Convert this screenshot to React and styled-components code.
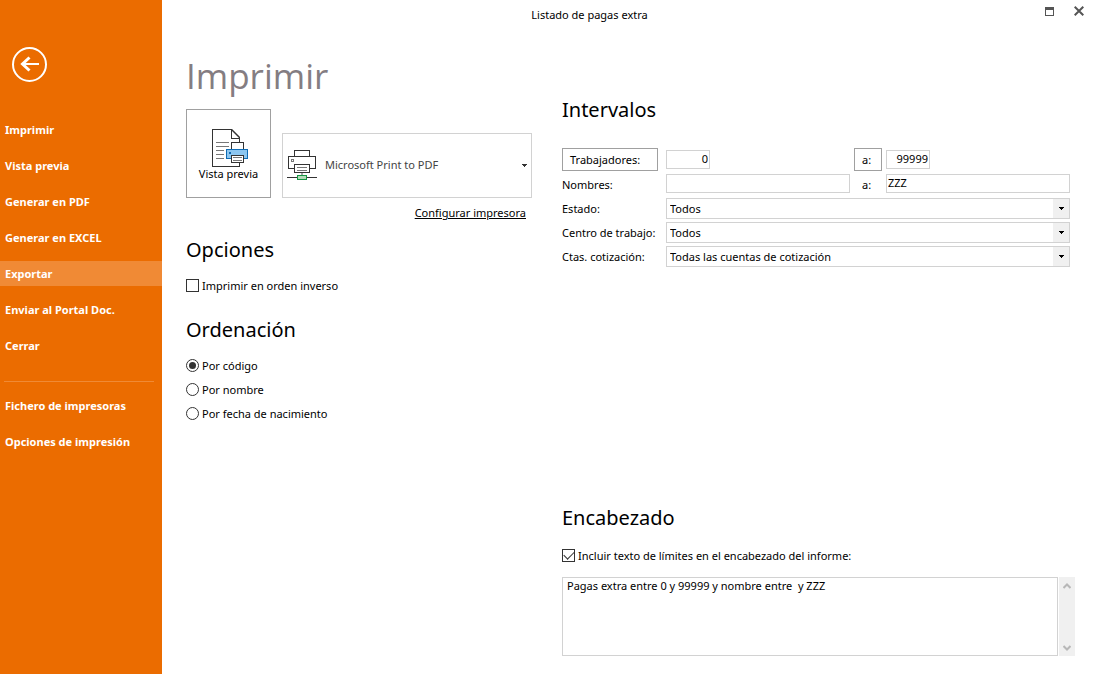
import React from 'react'
import styled, { createGlobalStyle, css } from 'styled-components';

const palette = {
  orange: '#eb6c00',
  orangeLight: '#f08a35',
  border: '#d2d2d2',
  borderDark: '#a0a0a0',
  gray: '#f0f0f0',
  text: '#000',
  title: '#847d82',
};

const GlobalStyle = createGlobalStyle`
  * {
    box-sizing: border-box;
  }

  body {
    margin: 0;
    background: #fff;
  }

  body, button, input, select, textarea {
    color: ${palette.text};
    font-family: 'Noto Sans', 'Open Sans', sans-serif;
    font-size: 11px;
  }
`;

const Page = styled.div`
  display: flex;
  min-height: 100vh;
`;

const Sidebar = styled.aside`
  flex: 0 0 162px;
  padding-top: 47px;
  background: ${palette.orange};
`;

const BackButton = styled.button`
  display: block;
  width: 35px;
  height: 35px;
  margin: 0 0 35px 12px;
  padding: 0;
  border: 0;
  background: none;
`;

const Nav = styled.nav`
  display: flex;
  flex-direction: column;
  gap: 11px;
`;

const NavLink = styled.a`
  padding-left: 5px;
  background: ${props => props.$active ? palette.orangeLight : 'none'};
  color: #fff;
  font-weight: bold;
  line-height: 25px;
  text-decoration: none;
`;

const Divider = styled.hr`
  height: 1px;
  margin: 12px 8px 0 4px;
  border: 0;
  background: ${palette.orangeLight};
`;

const Main = styled.main`
  display: flex;
  flex-direction: column;
  flex: 1;
  min-width: 0;
`;

const TitleBar = styled.header`
  display: flex;
  height: 30px;
`;

const WindowTitle = styled.div`
  flex: 1;
  line-height: 30px;
  text-align: center;
`;

const WindowActions = styled.div`
  display: flex;
  align-items: center;
  gap: 12px;
  width: 76px;
  height: 22px;
  padding-left: 23px;
`;

const WindowButton = styled.button`
  width: 18px;
  height: 16px;
  padding: 0;
  border: 0;
  background: none;

  svg {
    display: block;
    margin: 0 auto;
  }
`;

const Content = styled.div`
  display: grid;
  grid-template-columns: 346px 1fr;
  gap: 30px;
  flex: 1;
  padding: 22px 18px 18px 24px;
`;

const Column = styled.section`
  display: flex;
  flex-direction: column;
  padding-top: ${props => props.$top || 0}px;
`;

const PageTitle = styled.h1`
  margin: 0 0 9px;
  color: ${palette.title};
  font-family: 'Open Sans', 'Noto Sans', sans-serif;
  font-size: 35px;
  font-weight: normal;
  line-height: 48px;
`;

const Subtitle = styled.h2`
  margin: ${props => props.$top || 0}px 0 0;
  font-size: 20px;
  font-weight: normal;
  line-height: 30px;
`;

const PrintRow = styled.div`
  display: flex;
  align-items: flex-end;
  gap: 11px;
`;

const PreviewButton = styled.button`
  display: flex;
  flex-direction: column;
  align-items: center;
  width: 85px;
  height: 89px;
  padding: 19px 0 0;
  border: 1px solid ${palette.borderDark};
  background: #fff;
  line-height: 12px;
`;

const PrinterBox = styled.div`
  display: grid;
  align-items: center;
  flex: 1;
  height: 65px;
  border: 1px solid ${palette.border};

  > * {
    grid-area: 1 / 1;
  }

  svg {
    margin-left: 4px;
    pointer-events: none;
  }

  svg:last-child {
    justify-self: end;
    margin-right: 4px;
  }
`;

const PrinterSelect = styled.select`
  width: 100%;
  height: 100%;
  padding: 0 0 2px 42px;
  border: 0;
  appearance: none;
  background: none;
  color: #444;
`;

const SetupLink = styled.a`
  align-self: flex-end;
  margin: 7px 6px 0 0;
  color: ${palette.text};
  line-height: 16px;
`;

const Options = styled.div`
  display: flex;
  flex-direction: column;
  gap: 9px;
  margin-top: ${props => props.$top}px;
`;

const Option = styled.label`
  display: flex;
  align-items: center;
  gap: 3px;
  line-height: 15px;
`;

const mark = css`
  flex: none;
  width: 13px;
  height: 13px;
  margin: 0;
  border: 1px solid #333;
  appearance: none;
  background: #fff;
`;

const Checkbox = styled.input`
  ${mark}

  &:checked::after {
    content: '';
    display: block;
    width: 9px;
    height: 5px;
    margin: 1px;
    border: solid #333;
    border-width: 0 0 1px 1px;
    transform: rotate(-45deg);
  }
`;

const Radio = styled.input`
  ${mark}
  border-radius: 50%;

  &:checked::after {
    content: '';
    display: block;
    width: 7px;
    height: 7px;
    margin: 2px;
    border-radius: 50%;
    background: #333;
  }
`;

const Fields = styled.div`
  display: grid;
  grid-template-columns: 100px 1fr 28px 1fr;
  grid-auto-rows: 21px;
  align-items: start;
  gap: 3px 4px;
  margin: 25px 5px 0 0;
`;

const FieldButton = styled.button`
  height: 23px;
  margin: -2px ${props => props.$wide ? 4 : 0}px 0 0;
  padding: 0 7px;
  border: 1px solid ${palette.borderDark};
  background: #fff;
  text-align: left;
`;

const FieldLabel = styled.label`
  padding-left: ${props => props.$indent ? 8 : 0}px;
  line-height: 21px;
  white-space: nowrap;
`;

const TextInput = styled.input`
  width: ${props => props.$number ? '44px' : '100%'};
  height: 19px;
  padding: 0 1px 2px;
  border: 1px solid ${palette.border};
  background: #fff;
  text-align: ${props => props.$number ? 'right' : 'left'};
`;

const SelectBox = styled.div`
  display: grid;
  grid-template-columns: 1fr 16px;
  grid-column: 2 / -1;
  height: 21px;
  border: 1px solid ${palette.border};

  svg {
    grid-area: 1 / 2;
    width: 16px;
    height: 19px;
    background: ${palette.gray};
    pointer-events: none;
  }
`;

const Select = styled.select`
  grid-area: 1 / 1 / 2 / 3;
  height: 19px;
  padding: 0 3px;
  border: 0;
  appearance: none;
  background: none;
`;

const Header = styled.div`
  margin-top: auto;
`;

const TextRow = styled.div`
  display: flex;
  gap: 1px;
  height: 79px;
  margin-top: 14px;
`;

const TextArea = styled.textarea`
  flex: 1;
  padding: 0 4px;
  border: 1px solid ${palette.border};
  line-height: 16px;
  resize: none;
`;

const ScrollBar = styled.div`
  display: flex;
  flex-direction: column;
  justify-content: space-between;
  width: 16px;
  background: ${palette.gray};
`;

const ScrollButton = styled.button`
  height: 17px;
  padding: 0;
  border: 0;
  background: none;

  svg {
    display: block;
    margin: 0 auto;
  }
`;

const BackIcon = () => (
  <svg width="35" height="35" viewBox="0 0 35 35" fill="none" stroke="#fff" strokeWidth="2">
    <circle cx="17.5" cy="17.5" r="16.5" />
    <path d="M10 17h17" />
    <path d="M17.500 10.500L10.500 17l7 6.500" strokeWidth="3" />
  </svg>
);

const PreviewIcon = () => (
  <svg width="41" height="39" viewBox="-4 0 41 39" fill="none" shapeRendering="crispEdges">
    <path d="M.5 .5h19l8 8v29h-27z" fill="#fff" stroke="#333" />
    <path d="M19.500 .5v9h8" stroke="#333" />
    <path d="M19.500 .5l8 8" stroke="#333" shapeRendering="auto" strokeWidth="1.500" />
    <path d="M4 13.500h13M4 17.500h13M4 21.500h8M4 25.500h8M4 29.500h8" stroke="#777" />
    <path d="M19.500 20.500v-7h12v7" fill="#fff" stroke="#333" />
    <path d="M14.500 20.500h21v9h-21z" fill="#8cc6f0" stroke="#0f6cb5" />
    <path d="M17 23h2v2h-2z" fill="#0f6cb5" />
    <path d="M19.500 26.500h12v7h-12z" fill="#fff" stroke="#333" />
    <path d="M21 28.500h9M21 31.500h9" stroke="#777" />
  </svg>
);

const PrinterIcon = () => (
  <svg width="30" height="31" viewBox="0 0 30 31" fill="none" shapeRendering="crispEdges">
    <path d="M7.500 6.500v-6h15v6" stroke="#333" />
    <path d="M1.500 6.500h27v12h-27z" fill="#fff" stroke="#333" />
    <path d="M4.500 9.500h2v2h-2z" stroke="#777" />
    <path d="M7.500 14.500h15v8h-15z" fill="#fff" stroke="#333" />
    <path d="M10 17.500h10M10 20.500h10" stroke="#777" />
    <path d="M15 23v2" stroke="#aaa" strokeWidth="2" />
    <path d="M0 27.500h30" stroke="#333" />
    <path d="M10.500 25.500h9v4h-9z" fill="#b5dcb9" stroke="#149641" />
  </svg>
);

const Arrow = ({ color = '#000' }) => (
  <svg width="5" height="3" viewBox="0 0 5 3" shapeRendering="crispEdges">
    <path d="M0 0h5v1H0zM1 1h3v1H1zM2 2h1v1H2z" fill={color} />
  </svg>
);

const DropArrow = () => (
  <svg viewBox="0 0 16 19" shapeRendering="crispEdges">
    <path d="M6 8h5v1H6zM7 9h3v1H7zM8 10h1v1H8z" fill="#000" />
  </svg>
);

const Chevron = ({ down }) => (
  <svg width="8" height="6" viewBox="0 0 8 6" fill="none" stroke="#b8b8b8" strokeWidth="2">
    <path d={down ? 'M.5 1L4 4.500 7.500 1' : 'M.5 5L4 1.500 7.500 5'} />
  </svg>
);

const links = ['Imprimir', 'Vista previa', 'Generar en PDF', 'Generar en EXCEL', 'Exportar', 'Enviar al Portal Doc.', 'Cerrar'];
const extraLinks = ['Fichero de impresoras', 'Opciones de impresión'];
const orders = ['Por código', 'Por nombre', 'Por fecha de nacimiento'];

const selects = [
  { id: 'estado', label: 'Estado:', value: 'Todos' },
  { id: 'centro', label: 'Centro de trabajo:', value: 'Todos' },
  { id: 'cuentas', label: 'Ctas. cotización:', value: 'Todas las cuentas de cotización' },
];

const SelectField = ({ id, label, value }) => (
  <>
    <FieldLabel htmlFor={id}>{label}</FieldLabel>
    <SelectBox>
      <Select id={id}>
        <option>{value}</option>
      </Select>
      <DropArrow />
    </SelectBox>
  </>
);

const App = () => (
  <Page>
    <GlobalStyle />
    <Sidebar>
      <BackButton aria-label="Volver"><BackIcon /></BackButton>
      <Nav>
        {links.map(link =>
          <NavLink key={link} href="#" $active={link === 'Exportar'}>{link}</NavLink>
        )}
        <Divider />
        {extraLinks.map(link => <NavLink key={link} href="#">{link}</NavLink>)}
      </Nav>
    </Sidebar>
    <Main>
      <TitleBar>
        <WindowTitle>Listado de pagas extra</WindowTitle>
        <WindowActions>
          <WindowButton aria-label="Maximizar">
            <svg width="9" height="16" viewBox="0 0 9 16" shapeRendering="crispEdges">
              <path d="M.5 4.500h8v8h-8z" fill="none" stroke="#555" />
              <path d="M0 4h9v3H0z" fill="#555" />
            </svg>
          </WindowButton>
          <WindowButton aria-label="Cerrar">
            <svg width="10" height="16" viewBox="0 0 10 16">
              <path d="M.7 3.700l8.600 8.600M9.300 3.700L.7 12.300" stroke="#555" strokeWidth="2" />
            </svg>
          </WindowButton>
        </WindowActions>
      </TitleBar>
      <Content>
        <Column>
          <PageTitle>Imprimir</PageTitle>
          <PrintRow>
            <PreviewButton>
              <PreviewIcon />
              Vista previa
            </PreviewButton>
            <PrinterBox>
              <PrinterIcon />
              <PrinterSelect aria-label="Impresora">
                <option>Microsoft Print to PDF</option>
              </PrinterSelect>
              <Arrow color="#333" />
            </PrinterBox>
          </PrintRow>
          <SetupLink href="#">Configurar impresora</SetupLink>
          <Subtitle $top={14}>Opciones</Subtitle>
          <Options $top={13}>
            <Option><Checkbox type="checkbox" />Imprimir en orden inverso</Option>
          </Options>
          <Subtitle $top={22}>Ordenación</Subtitle>
          <Options $top={13}>
            {orders.map((order, index) =>
              <Option key={order}>
                <Radio type="radio" name="orden" defaultChecked={index === 0} />{order}
              </Option>
            )}
          </Options>
        </Column>
        <Column $top={43}>
          <Subtitle>Intervalos</Subtitle>
          <Fields>
            <FieldButton $wide>Trabajadores:</FieldButton>
            <TextInput $number aria-label="Trabajadores desde" defaultValue="0" />
            <FieldButton>a:</FieldButton>
            <TextInput $number aria-label="Trabajadores hasta" defaultValue="99999" />
            <FieldLabel htmlFor="nombreDesde">Nombres:</FieldLabel>
            <TextInput id="nombreDesde" />
            <FieldLabel htmlFor="nombreHasta" $indent>a:</FieldLabel>
            <TextInput id="nombreHasta" defaultValue="ZZZ" />
            {selects.map(field => <SelectField key={field.id} {...field} />)}
          </Fields>
          <Header>
            <Subtitle>Encabezado</Subtitle>
            <Options $top={15}>
              <Option>
                <Checkbox type="checkbox" defaultChecked />
                Incluir texto de límites en el encabezado del informe:
              </Option>
            </Options>
            <TextRow>
              <TextArea aria-label="Texto del encabezado" defaultValue="Pagas extra entre 0 y 99999 y nombre entre  y ZZZ" />
              <ScrollBar>
                <ScrollButton aria-label="Subir"><Chevron /></ScrollButton>
                <ScrollButton aria-label="Bajar"><Chevron down /></ScrollButton>
              </ScrollBar>
            </TextRow>
          </Header>
        </Column>
      </Content>
    </Main>
  </Page>
);

export default App;
